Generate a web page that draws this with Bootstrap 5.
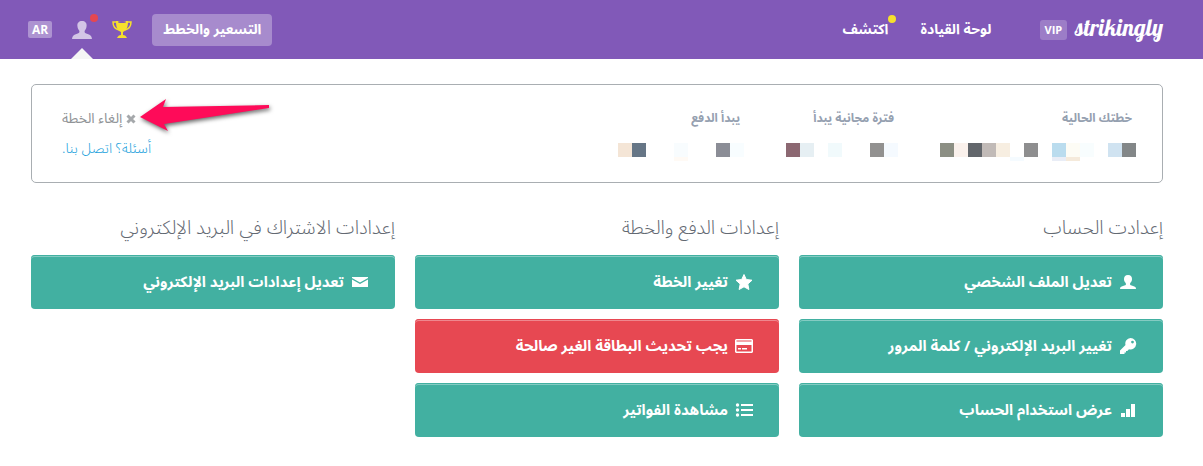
<!DOCTYPE html>
<html lang="ar" dir="rtl">
<head>
<meta charset="utf-8">
<meta name="viewport" content="width=device-width, initial-scale=1">
<title>إعدادات الحساب</title>
<link href="https://cdn.jsdelivr.net/npm/bootstrap@5.3.0/dist/css/bootstrap.min.css" rel="stylesheet">
<style>
  body { font-family: "Noto Sans Arabic", "Noto Kufi Arabic", "Open Sans", "DejaVu Sans Condensed", "DejaVu Sans", sans-serif; font-size: 14px; color: #636972; }
  .page-inset { padding-left: 31px; padding-right: 40px; }
  .topbar { background: #8159b8; height: 59px; gap: 20px; padding-left: 28px; }
  .topbar a { color: #fff; text-decoration: none; font-weight: 700; white-space: nowrap; }
  .topbar .logo { font-family: Lobster, "DejaVu Serif Condensed", "DejaVu Serif", serif; font-weight: 400; font-size: 23px; line-height: 28px; padding-bottom: 3px; }
  .tag { background: rgba(255,255,255,.22); border-radius: 3px; color: #fff; font: 700 11px/20px "Open Sans", sans-serif; padding: 0 5px; }
  .topbar .lang { background: rgba(255,255,255,.35); border-radius: 2px; font: 700 12px/17px "Open Sans", sans-serif; padding: 0 4px; }
  .links { gap: 32px; margin-right: 28px; }
  .dot { position: absolute; border-radius: 50%; width: 8px; height: 8px; }
  .dot-new { background: #f6e02c; top: -4px; left: 100%; }
  .dot-alert { background: #e54751; top: 14px; right: -6px; }
  .topbar .pricing { background: rgba(255,255,255,.3); border-radius: 4px; line-height: 32px; padding: 0 11px; }
  .pointer { position: absolute; bottom: 0; left: -1px; }
  .plan { border: 1px solid #a9aeb2; border-radius: 5px; margin-top: 25px; padding: 22px 26px 21px 30px; }
  .facts { gap: 42px; }
  .facts dt { color: #95a0b0; font-size: 12px; font-weight: 700; line-height: 24px; padding-right: 4px; margin-bottom: 12px; }
  .facts svg { display: block; }
  .plan-links { font-size: 14px; font-weight: 300; line-height: 24px; gap: 6px; }
  .plan-links button { color: #909396; background: none; border: 0; padding: 0; line-height: 24px; }
  .plan-links a { color: #1a9fdc; text-decoration: none; }
  .callout-arrow { position: absolute; left: 76px; top: -9px; pointer-events: none; filter: drop-shadow(1px 2px 2px rgba(0,0,0,.6)); }
  .sections { display: grid; grid-template-columns: repeat(3, 1fr); gap: 20px; margin-top: 30px; }
  .sections h2 { font-size: 19px; font-weight: 300; line-height: 30px; margin-bottom: 12px; white-space: nowrap; }
  .actions { display: grid; gap: 10px; }
  .action { background: #42b0a1; color: #fff; border: 0; border-radius: 4px; height: 54px; padding: 0 26px; gap: 7px; font-size: 15px; font-weight: 700; box-shadow: inset 0 1px #42b0a1, inset 0 2px rgba(255,255,255,.35); }
  .action.danger { background: #e74852; box-shadow: inset 0 1px #e74852, inset 0 2px rgba(255,255,255,.35); }
  .action svg { width: 18px; height: 18px; flex: none; }
</style>
</head>
<body>
<header class="topbar page-inset d-flex align-items-center">
  <div class="d-flex align-items-center gap-2">
    <a class="logo" href="#" dir="ltr">strikingly</a>
    <span class="tag">VIP</span>
  </div>
  <nav class="links d-flex">
    <a href="#">لوحة القيادة</a>
    <a class="position-relative" href="#">اكتشف<span class="dot dot-new"></span></a>
  </nav>
  <a class="pricing me-auto" href="#">التسعير والخطط</a>
  <a href="#" aria-label="المكافآت"><svg class="d-block" width="20" height="19" viewBox="0 0 20 19"><path d="M5 2H1c0 5 2 7 6 8M15 2h4c0 5-2 7-6 8" fill="none" stroke="#f6e02c" stroke-width="1.500"/><path d="M4 1h12c0 6-1 9-5 11v3c2 0 3 1 4 3H5c1-2 2-3 4-3v-3C5 10 4 7 4 1z" fill="#f6e02c"/><ellipse cx="10" cy="2" rx="4" ry="1" fill="#8159b8"/></svg></a>
  <a class="position-relative h-100 d-flex align-items-center" href="#" aria-label="الحساب">
    <svg width="20" height="18" viewBox="0 0 20 18"><path fill="#d3c5e6" d="M10 0c3 0 5 2 4.600 5-.2 3-1.600 4-2 5-.3 2 1 2 3 3 3 1 4 2 4.400 5H0c.4-3 1.400-4 4.400-5 2-1 3.300-1 3-3-.4-1-1.800-2-2-5C5 2 7 0 10 0z"/></svg>
    <span class="dot dot-alert"></span>
    <svg class="pointer" width="22" height="11" viewBox="0 0 22 11"><path fill="#f5f5f5" d="M11 0l11 11H0z"/></svg>
  </a>
  <a class="lang" href="#">AR</a>
</header>

<main class="page-inset">
  <section class="plan d-flex justify-content-between">
    <dl class="facts d-flex mb-0">
      <div><dt>خطتك الحالية</dt><dd class="m-0">
        <svg width="196" height="18"><path fill="#8c8f84" d="M0 0h14v14H0z"/><path fill="#faf1ec" d="M14 0h14v14H14z"/><path fill="#62666b" d="M28 0h14v14H28z"/><path fill="#c1bab7" d="M42 0h14v14H42z"/><path fill="#f7eee1" d="M56 0h14v14H56z"/><path fill="#f5fbff" d="M70 14h14v4H70z"/><path fill="#8e8e8f" d="M84 0h14v14H84z"/><path fill="#badcee" d="M112 0h14v14h-14z"/><path fill="#e9edf6" d="M112 14h14v4h-14z"/><path fill="#fdfcf5" d="M126 0h14v14h-14z"/><path fill="#f5eadb" d="M126 14h14v4h-14z"/><path fill="#f8fdfe" d="M140 0h14v14h-14z"/><path fill="#d0e3f1" d="M168 0h14v14h-14z"/><path fill="#838788" d="M182 0h14v14h-14z"/></svg></dd></div>
      <div><dt>فترة مجانية يبدأ</dt><dd class="m-0">
        <svg width="112" height="18"><path fill="#8c6872" d="M0 0h14v14H0z"/><path fill="#e6eff3" d="M14 0h14v14H14z"/><path fill="#f1fafc" d="M42 0h14v14H42z"/><path fill="#929190" d="M84 0h14v14H84z"/><path fill="#f5faff" d="M98 0h14v14H98z"/></svg></dd></div>
      <div><dt>يبدأ الدفع</dt><dd class="m-0">
        <svg width="126" height="18"><path fill="#f4e5d6" d="M0 0h14v14H0z"/><path fill="#667686" d="M14 0h14v14H14z"/><path fill="#f8fcfe" d="M56 0h14v14H56z"/><path fill="#fffaf5" d="M56 14h14v4H56z"/><path fill="#8b8d96" d="M98 0h14v14H98z"/><path fill="#f8fdff" d="M112 0h14v14h-14z"/></svg></dd></div>
    </dl>
    <div class="plan-links position-relative d-flex flex-column align-items-end">
      <button type="button" class="d-flex align-items-center gap-1"><svg width="10" height="10" viewBox="0 0 10 10"><path d="M1.500 1.500l7 7M8.500 1.500l-7 7" stroke="#a5a8ab" stroke-width="3"/></svg>إلغاء الخطة</button>
      <a href="#">أسئلة؟ اتصل بنا.</a>
      <svg class="callout-arrow" width="136" height="44" viewBox="0 0 136 44"><path fill="#fe0b59" d="M2 19L28 1l-3 8 106-2v3L26 26l4 7z"/></svg>
    </div>
  </section>

  <div class="sections">
    <section>
      <h2>إعدادت الحساب</h2>
      <div class="actions">
        <button class="action d-flex align-items-center"><svg viewBox="0 0 18 18"><path fill="#fff" d="M9 2c3 0 4 2 4 4 0 3-1.500 3-2 5 0 1 1 1.500 3 2s3 1 3 3H1c0-2 1-2.500 3-3s3-1 3-2C6.500 9 5 9 5 6c0-2 1-4 4-4z"/></svg>تعديل الملف الشخصي</button>
        <button class="action d-flex align-items-center"><svg viewBox="0 0 18 18"><path fill="#fff" fill-rule="evenodd" d="M11.500 1a5.700 5.700 0 1 1-1.500 11.200L8.300 14H7v1.500H5.500V17H1v-3.500l5.500-5.500A5.500 5.500 0 0 1 11.500 1zm2 2.700a1.400 1.400 0 1 0 0 2.800 1.400 1.400 0 0 0 0-2.800z"/></svg>تغيير البريد الإلكتروني / كلمة المرور</button>
        <button class="action d-flex align-items-center"><svg viewBox="0 0 18 18"><path fill="#fff" d="M2 12h4v4H2zM7 8h4v8H7zM12 3h4v13h-4z"/></svg>عرض استخدام الحساب</button>
      </div>
    </section>
    <section>
      <h2>إعدادات الدفع والخطة</h2>
      <div class="actions">
        <button class="action d-flex align-items-center"><svg viewBox="0 0 18 18"><path fill="#fff" stroke="#fff" stroke-linejoin="round" d="M9 1.500l2.300 5 5.700.7-4.200 3.800 1.100 5.500L9 13.800l-4.900 2.700L5.200 11 1 7.200l5.700-.7z"/></svg>تغيير الخطة</button>
        <button class="action danger d-flex align-items-center"><svg viewBox="0 0 18 18"><path fill="#fff" fill-rule="evenodd" d="M1 2h16l1 1v12l-1 1H1l-1-1V3zm.5 1.500v1h15v-1zM1.500 8v6.500h15V8zM3 11h3v1.500H3zm4 0h5v1.500H7z"/></svg>يجب تحديث البطاقة الغير صالحة</button>
        <button class="action d-flex align-items-center"><svg viewBox="0 0 18 18"><path fill="#fff" d="M6 3h12v2H6zM6 8h12v2H6zM6 13h12v2H6z"/><g fill="#fff"><circle cx="2.500" cy="4" r="1.700"/><circle cx="2.500" cy="9" r="1.700"/><circle cx="2.500" cy="14" r="1.700"/></g></svg>مشاهدة الفواتير</button>
      </div>
    </section>
    <section>
      <h2>إعدادات الاشتراك في البريد الإلكتروني</h2>
      <div class="actions">
        <button class="action d-flex align-items-center"><svg viewBox="0 0 18 18"><path fill="#fff" d="M1 4h16v1L9 9.500 1 5zM1 6.500L9 11l8-4.500V14H1z"/></svg>تعديل إعدادات البريد الإلكتروني</button>
      </div>
    </section>
  </div>
</main>
<script src="https://cdn.jsdelivr.net/npm/bootstrap@5.3.0/dist/js/bootstrap.bundle.min.js"></script>
</body>
</html>
